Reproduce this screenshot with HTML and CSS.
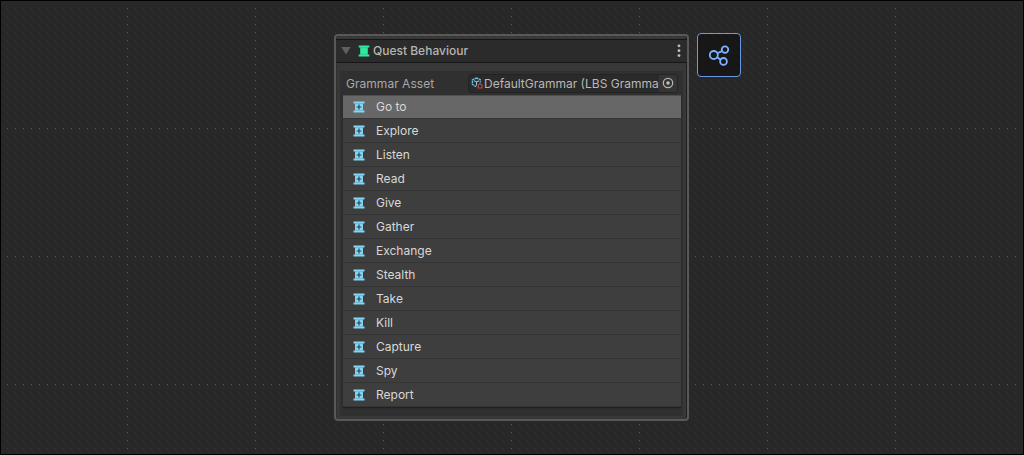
FILE: index.html
```
<!DOCTYPE html>
<html lang="en">
<head>
<meta charset="utf-8">
<title>Quest Behaviour</title>
<link rel="stylesheet" href="styles.css">
</head>
<body>
<svg class="defs" width="0" height="0">
  <symbol id="quest" viewBox="0 0 12 12">
    <path fill="#83d6f5" d="M.5.5h11v2H10v6.9h1.5v2H.5v-2H2V2.5H.5z"/>
    <path fill="none" stroke="#34434a" stroke-width="1.2" d="M6 3.6v4.8M3.6 6h4.8"/>
    <path fill="none" stroke="#5d9bb3" stroke-width=".5" d="M2 2.6h8M2 9.3h8"/>
  </symbol>
</svg>
<main class="canvas">
  <svg class="grid" width="1024" height="455">
    <defs>
      <pattern id="dots" x="7" y="8" width="8" height="8" patternUnits="userSpaceOnUse"><rect width="1" height="1" fill="#383838"/></pattern>
      <pattern id="cols" x="127" y="8" width="128" height="8" patternUnits="userSpaceOnUse"><rect width="1" height="1" fill="#5c5c5c"/></pattern>
      <pattern id="rows" x="7" y="128" width="8" height="128" patternUnits="userSpaceOnUse"><rect width="1" height="1" fill="#5c5c5c"/></pattern>
    </defs>
    <rect width="1024" height="455" fill="url(#dots)"/>
    <rect width="1024" height="455" fill="url(#cols)"/>
    <rect width="1024" height="455" fill="url(#rows)"/>
  </svg>
  <section class="panel">
    <header class="header">
      <svg class="fold" width="10" height="8" viewBox="0 0 10 8"><path fill="#606060" d="M.3 0h9.4L5 7.5z"/></svg>
      <svg class="spool" width="12" height="12" viewBox="0 0 12 12"><path fill="#2eeaa0" d="M.7.5h10.6v2H9.8v7h1.5v2H.7v-2h1.5v-7H.7z"/><path stroke="#20b880" stroke-width=".5" d="M2 2.7h8M2 9.3h8"/></svg>
      <h1 class="title">Quest Behaviour</h1>
      <svg class="more" width="4" height="14" viewBox="0 0 4 14"><g fill="#c0c0c0"><circle cx="2" cy="1.8" r="1.4"/><circle cx="2" cy="6.7" r="1.4"/><circle cx="2" cy="11.6" r="1.4"/></g></svg>
    </header>
    <div class="content">
      <div class="field">
        <span class="label">Grammar Asset</span>
        <div class="object">
          <svg class="asset" width="12" height="12" viewBox="0 0 12 12" fill="none"><path stroke="#6dbce2" stroke-width="1.4" stroke-dasharray="2.2 .6" d="M5.5 1 9.3 2.8v2.6M5.5 1 1.4 3v4.4l3.8 2.4"/><path stroke="#8ccbe5" stroke-width="1.1" d="m3 3.8 2.5 1.2L8 3.8M5.5 5v3.6"/><path stroke="#b44e3b" stroke-width="1.2" d="M7.3 11V7.8l1.7-1 1.9 1.2V11z"/></svg>
          <span class="value">DefaultGrammar (LBS Gramma</span>
          <span class="picker"><svg width="12" height="12" viewBox="0 0 12 12"><circle cx="6" cy="6" r="4.7" fill="none" stroke="#b4b4b4" stroke-width="1.3"/><circle cx="6" cy="6" r="1.7" fill="#c4c4c4"/></svg></span>
        </div>
      </div>
      <ul class="list">
        <li class="row selected"><svg class="icon"><use href="#quest"/></svg>Go to</li>
        <li class="row"><svg class="icon"><use href="#quest"/></svg>Explore</li>
        <li class="row"><svg class="icon"><use href="#quest"/></svg>Listen</li>
        <li class="row"><svg class="icon"><use href="#quest"/></svg>Read</li>
        <li class="row"><svg class="icon"><use href="#quest"/></svg>Give</li>
        <li class="row"><svg class="icon"><use href="#quest"/></svg>Gather</li>
        <li class="row"><svg class="icon"><use href="#quest"/></svg>Exchange</li>
        <li class="row"><svg class="icon"><use href="#quest"/></svg>Stealth</li>
        <li class="row"><svg class="icon"><use href="#quest"/></svg>Take</li>
        <li class="row"><svg class="icon"><use href="#quest"/></svg>Kill</li>
        <li class="row"><svg class="icon"><use href="#quest"/></svg>Capture</li>
        <li class="row"><svg class="icon"><use href="#quest"/></svg>Spy</li>
        <li class="row"><svg class="icon"><use href="#quest"/></svg>Report</li>
      </ul>
    </div>
  </section>
  <button class="tool" aria-label="Graph">
    <svg width="22" height="22" viewBox="0 0 22 22" fill="none" stroke="#7eb0ff" stroke-width="1.8"><circle cx="5.8" cy="11" r="4"/><circle cx="17" cy="5.6" r="3.3"/><circle cx="15.5" cy="17.4" r="3.4"/><path d="m9.4 9.3 4.5-2.2M9.1 13.2l3.4 2.2"/></svg>
  </button>
</main>
</body>
</html>
```
FILE: styles.css
```
* { box-sizing: border-box; }
body { margin: 0; font-family: Inter, "Liberation Sans", sans-serif; }
.defs { position: absolute; }
.canvas {
  position: relative;
  display: flex;
  align-items: flex-start;
  gap: 8px;
  width: 1024px;
  height: 455px;
  padding: 32px 0 0 333px;
  background: #282828;
  border: 1px solid #000;
  overflow: hidden;
}
.grid { position: absolute; left: -1px; top: -1px; }
.panel {
  position: relative;
  width: 355px;
  height: 387px;
  margin-top: 1px;
  padding: 3px 0 0;
  background: #383838;
  border: 2px solid #585858;
  border-radius: 4px;
  box-shadow: inset -1px 0 #202020, inset 1px 0 #303030;
}
.header {
  display: flex;
  align-items: center;
  height: 24px;
  padding: 0 6px 0 5px;
  background: #2b2b2b;
  border-top: 1px solid #161616;
  border-bottom: 1px solid #161616;
}
.spool { margin-left: 7px; }
.title { margin: 0 auto 0 3px; font-size: 12px; font-weight: 500; line-height: 20px; color: #b5b5b5; }
.content {
  width: 343px;
  height: 345px;
  margin: 8px 0 0 4px;
  padding: 0 2px 0 3px;
  background: #303030;
}
.field {
  display: flex;
  align-items: center;
  height: 24px;
  padding: 0 3px;
}
.label { width: 122px; font-size: 12px; letter-spacing: .03px; color: #a8a8a8; }
.object {
  display: flex;
  align-items: center;
  width: 210px;
  height: 19px;
  padding-left: 2px;
  border: 1px solid #242424;
  border-radius: 3px;
  background: #2a2a2a;
  overflow: hidden;
}
.asset { flex: none; }
.value { width: 175px; margin-left: 1px; font-size: 12px; color: #b8b8b8; white-space: nowrap; }
.picker {
  display: flex;
  align-items: center;
  justify-content: center;
  width: 18px;
  height: 17px;
  background: #353535;
}
.list {
  margin: 0;
  padding: 0;
  list-style: none;
  box-shadow: 0 1px 1px #202020;
}
.row {
  display: flex;
  align-items: center;
  gap: 11px;
  height: 24px;
  padding-left: 10px;
  font-size: 12px;
  color: #d8d8d8;
  background: #3e3e3e;
  border-bottom: 1px solid #343434;
}
.selected { background: #676767; box-shadow: inset 0 1px #505050; }
.icon { width: 12px; height: 12px; }
.tool {
  position: relative;
  display: flex;
  align-items: center;
  justify-content: center;
  width: 44px;
  height: 44px;
  padding: 0;
  background: #171717;
  border: 1px solid #6a99e2;
  border-radius: 4px;
}
```
